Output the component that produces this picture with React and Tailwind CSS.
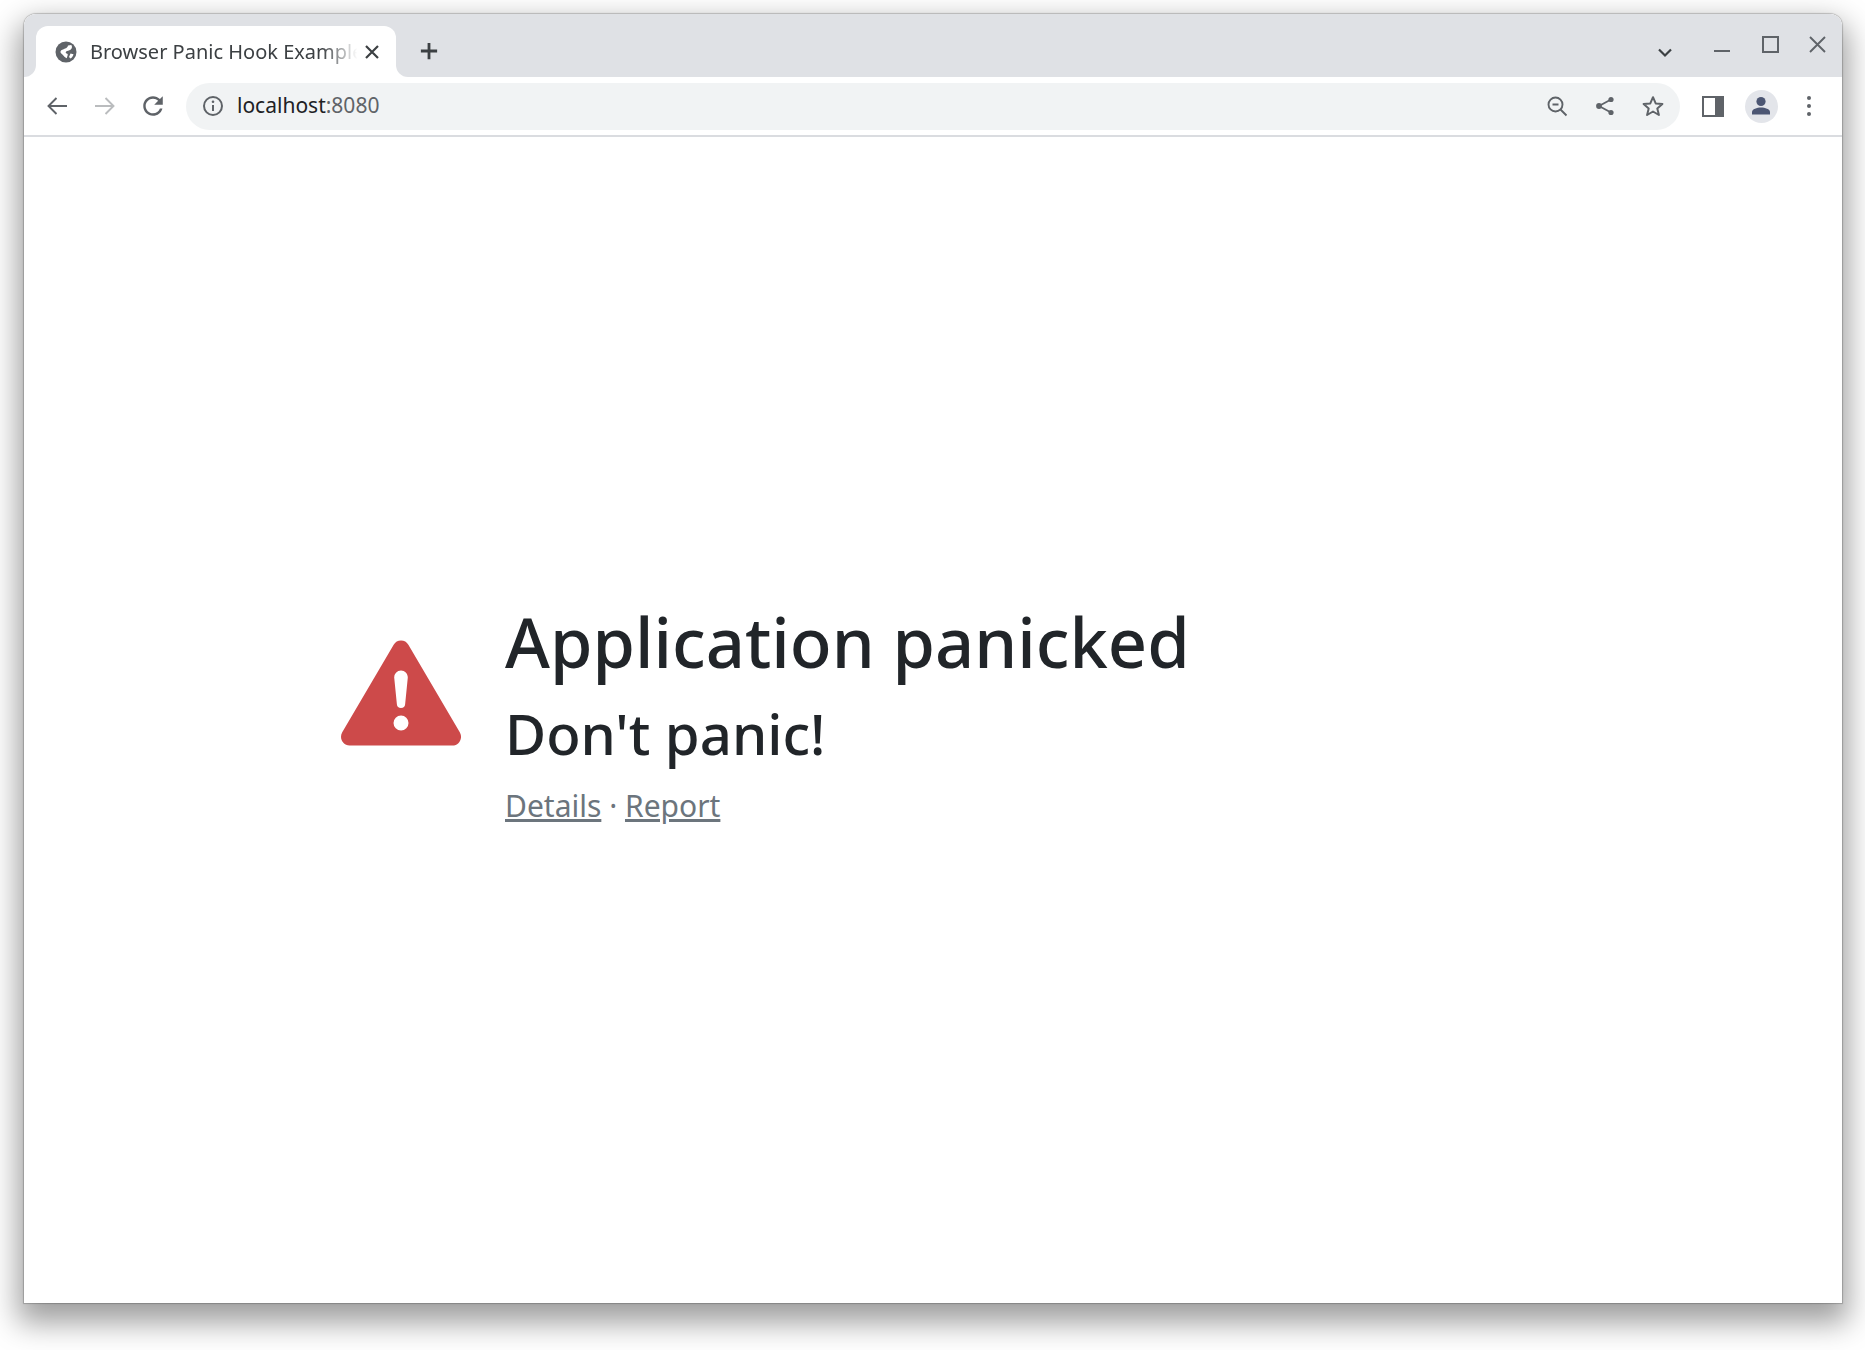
import React from 'react';

function Globe() {
  return (
    <svg viewBox="0 0 22 22" className="w-[22px] h-[22px] shrink-0">
      <circle cx="11" cy="11" r="10.500" fill="#5f6368" />
      <path d="M10 7.500c1.500-.3 2.600-1.300 3-3l3.300-.6c1.200 1.400.8 3.600-.8 4.900-1.400 1.100-3.300.7-4.300 1.700-.8.8-.5 1.800.5 2.100l1 .4c.2 1.300-.6 2.500-.9 4.300-2-.6-3.200-3.100-5.200-4.600-.9-.7-1.400-1.500-1-2.500.6-1.500 2.600-1.500 4.400-2.700z" fill="white" />
      <path d="M15.500 12.500l3 .8c-.4 1.800-1.500 3.200-3 4.200l-1.500-1.500z" fill="white" />
    </svg>
  );
}

// stroke icons for the browser chrome, all on a 24px grid
function Icon({ children, color = '#5f6368', width = 2, className = 'w-[24px] h-[24px]' }) {
  return (
    <svg viewBox="0 0 24 24" className={className} fill="none" stroke={color} strokeWidth={width}>
      {children}
    </svg>
  );
}

function ToolButton({ children }) {
  return <div className="w-[48px] h-[48px] flex items-center justify-center shrink-0">{children}</div>;
}

function TabStrip() {
  return (
    <div className="flex h-[63px] bg-white shrink-0">
      <div className="w-[12px] bg-[#dfe1e5] rounded-br-[12px]" />
      <div className="w-[360px] bg-[#dfe1e5] pt-[12px]">
        <div className="h-full bg-white rounded-t-[12px] flex items-center pl-[19px] pr-[12px]">
          <Globe />
          <div className="ml-[13px] flex-1 overflow-hidden whitespace-nowrap text-[20px] text-[#3c4043] [mask-image:linear-gradient(to_right,black_86%,transparent_99%)]">
            Browser Panic Hook Example
          </div>
          <div className="w-[24px] h-[24px] flex items-center justify-center">
            <Icon color="#3c4043" width={2.2} className="w-[24px] h-[24px]">
              <path d="M6 6l12 12M18 6L6 18" />
            </Icon>
          </div>
        </div>
      </div>
      <div className="flex-1 flex bg-[#dfe1e5] rounded-bl-[12px]">
        <div className="ml-[9px] w-[48px] h-full pt-[11px] flex items-center justify-center">
          <Icon color="#3c4043" width={2.6} className="w-[26px] h-[26px]">
            <path d="M12 4.500v15M4.500 12h15" />
          </Icon>
        </div>
        <div className="flex-1" />
        <div className="w-[48px] pt-[12px] flex items-center justify-center">
          <Icon color="#3c4043" width={2.2}>
            <path d="M6 9.500l6 6 6-6" />
          </Icon>
        </div>
        <div className="w-[9px]" />
        <div className="w-[48px] flex justify-center pt-[23px]">
          <svg viewBox="0 0 18 18" className="w-[18px] h-[18px]" stroke="#5f6368" strokeWidth="2.2">
            <path d="M1 14h16" />
          </svg>
        </div>
        <div className="w-[48px] flex justify-center pt-[22px]">
          <div className="w-[17px] h-[17px] border-2 border-[#5f6368]" />
        </div>
        <div className="w-[48px] flex justify-center pt-[19px]">
          <Icon color="#5f6368" width={1.9} className="w-[24px] h-[24px]">
            <path d="M4 4l15 15M19 4L4 19" />
          </Icon>
        </div>
      </div>
    </div>
  );
}

function Toolbar() {
  return (
    <div className="flex items-center h-[60px] bg-white border-b-2 border-[#dadce0] pl-[9px] shrink-0">
      <ToolButton>
        <Icon width={1.900}>
          <path d="M22 12H3.500M11.500 4l-8 8 8 8" />
        </Icon>
      </ToolButton>
      <ToolButton>
        <Icon color="#babcbe" width={1.900}>
          <path d="M2 12h18.500M12.500 4l8 8-8 8" />
        </Icon>
      </ToolButton>
      <ToolButton>
        <svg viewBox="3 3 18 18" className="w-[22px] h-[22px]" fill="#5f6368">
          <path d="M17.650 6.350C16.200 4.900 14.210 4 12 4c-4.420 0-7.990 3.580-7.990 8s3.570 8 7.990 8c3.730 0 6.840-2.550 7.730-6h-2.080c-.82 2.330-3.040 4-5.650 4-3.310 0-6-2.690-6-6s2.690-6 6-6c1.660 0 3.140.69 4.220 1.780L13 11h7V4l-2.350 2.350z" />
        </svg>
      </ToolButton>
      <div className="ml-[9px] w-[1494px] h-[47px] rounded-full bg-[#f1f3f4] flex items-center pl-[15px] pr-[3px]">
        <Icon width={2} className="w-[24px] h-[24px]">
          <circle cx="12" cy="12" r="9" />
          <path d="M12 11v6" />
          <circle cx="12" cy="7.800" r="1.300" fill="#5f6368" stroke="none" />
        </Icon>
        <div className="ml-[12px] flex-1 text-[21px] text-[#202124]">
          localhost<span className="text-[#5f6368]">:8080</span>
        </div>
        <ToolButton>
          <Icon width={1.9}>
            <circle cx="10.500" cy="10.500" r="7" />
            <path d="M15.500 15.500l6 6M7.500 10.500h6" />
          </Icon>
        </ToolButton>
        <ToolButton>
          <Icon width={1.8}>
            <path d="M18 5.500L6 12l12 6.500" />
            <circle cx="18" cy="5.500" r="2.600" fill="#5f6368" stroke="none" />
            <circle cx="6" cy="12" r="2.900" fill="#5f6368" stroke="none" />
            <circle cx="18" cy="18.500" r="2.600" fill="#5f6368" stroke="none" />
          </Icon>
        </ToolButton>
        <ToolButton>
          <Icon width={2}>
            <path d="M12 3.200l2.700 6.200 6.700.6-5.100 4.400 1.600 6.600-5.900-3.500-5.900 3.500 1.600-6.600L2.600 10l6.700-.6z" strokeLinejoin="round" />
          </Icon>
        </ToolButton>
      </div>
      <div className="ml-[9px]">
        <ToolButton>
          <div className="w-[22px] h-[21px] flex border-[2px] border-[#5f6368] bg-[#5f6368]">
            <div className="w-[11px] bg-white" />
          </div>
        </ToolButton>
      </div>
      <ToolButton>
        <div className="w-[33px] h-[33px] rounded-full bg-[#e3e5ea] flex items-center justify-center">
          <svg viewBox="0 0 24 24" className="w-[24px] h-[24px]" fill="#4c5673">
            <circle cx="12" cy="7.500" r="4.600" />
            <path d="M3 20.500v-2.500c0-3 5-4.500 9-4.500s9 1.500 9 4.500v2.500z" />
          </svg>
        </div>
      </ToolButton>
      <ToolButton>
        <div className="flex flex-col gap-[3.500px]">
          <div className="w-[4.500px] h-[4.500px] rounded-full bg-[#5f6368]" />
          <div className="w-[4.500px] h-[4.500px] rounded-full bg-[#5f6368]" />
          <div className="w-[4.500px] h-[4.500px] rounded-full bg-[#5f6368]" />
        </div>
      </ToolButton>
    </div>
  );
}

function PanicMessage() {
  return (
    <div className="flex-1 flex items-center pl-[317px] pb-[10px]">
      <svg viewBox="0 0 16 16" className="w-[120px] h-[120px] shrink-0 mb-[44px]" fill="#cd4a4a">
        <path d="M8.982 1.566a1.13 1.13 0 0 0-1.96 0L.165 13.233c-.457.778.091 1.767.98 1.767h13.713c.889 0 1.438-.99.98-1.767L8.982 1.566zM8 5c.535 0 .954.462.9.995l-.35 3.507a.552.552 0 0 1-1.1 0L7.100 5.995A.905.905 0 0 1 8 5zm.002 6a1 1 0 1 1 0 2 1 1 0 0 1 0-2z" />
      </svg>
      <div className="ml-[44px] text-[#212529]">
        <h1 className="text-[68.600px] font-medium leading-[80px]">Application panicked</h1>
        <h2 className="text-[56.300px] font-medium leading-[66px] mt-[18px]">Don't panic!</h2>
        <p className="text-[30px] leading-[45px] mt-[17px] text-[#6c757d]">
          <a className="underline" href="#details">Details</a>
          <span> · </span>
          <a className="underline" href="#report">Report</a>
        </p>
      </div>
    </div>
  );
}

export default function App() {
  return (
    <div className="w-[1865px] h-[1350px] bg-white pl-[24px] pt-[14px] overflow-hidden font-['Noto_Sans',sans-serif]">
      <div className="w-[1818px] h-[1289px] flex flex-col bg-white rounded-t-[12px] overflow-hidden shadow-[0_0_1px_1px_rgba(0,0,0,0.2),0_14px_30px_6px_rgba(0,0,0,0.38)]">
        <TabStrip />
        <Toolbar />
        <PanicMessage />
      </div>
    </div>
  );
}
